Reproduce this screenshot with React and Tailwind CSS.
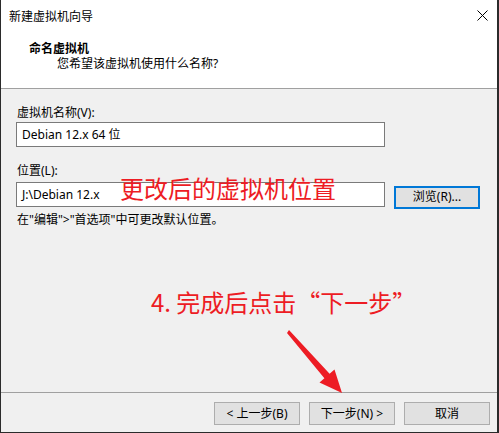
import React from 'react';

const ui = { fontFamily: '"Noto Sans", "Noto Sans CJK SC", sans-serif' };
const mark = { fontFamily: '"Noto Sans CJK SC", "Noto Sans", sans-serif' };

function WinButton({ children, focused }) {
  return (
    <button
      className={`h-[23px] w-[86px] bg-[#e1e1e1] text-[12px] leading-none text-black ${focused ? 'border-2 border-[#0078d7]' : 'border border-[#adadad]'}`}
    >
      {children}
    </button>
  );
}

export default function App() {
  return (
    <div className="relative w-[499px] h-[433px] bg-[#f0f0f0] border-l border-r-2 border-b border-[#2b2b2b] flex flex-col text-black" style={ui}>
      {/* header */}
      <div className="h-[89px] bg-white border-b border-[#a0a0a0] shrink-0">
        <div className="h-[34px] flex items-center justify-between pl-[8px] pr-[9px]">
          <span className="text-[12px]">新建虚拟机向导</span>
          <svg width="11" height="11" viewBox="0 0 11 11" className="mt-[-3px]">
            <path d="M0.5 0.5 L10.5 10.5 M10.5 0.5 L0.5 10.5" stroke="#000" strokeWidth="1" fill="none" />
          </svg>
        </div>
        <div className="mt-[7px] pl-[28px] text-[12px] leading-[15px] font-bold">命名虚拟机</div>
        <div className="pl-[56px] text-[12px] leading-[15px]">您希望该虚拟机使用什么名称?</div>
      </div>

      {/* body */}
      <div className="flex-1 pl-[15px] pt-[16px]">
        <div className="pl-[1px] text-[12px] leading-[16px]">虚拟机名称(V):</div>
        <div className="mt-[1px] w-[369px] h-[25px] bg-white border border-[#7a7a7a] flex items-center pl-[5px] text-[12px]">
          Debian 12.x 64 位
        </div>

        <div className="mt-[16px] pl-[1px] text-[12px] leading-[16px]">位置(L):</div>
        <div className="mt-[3px] flex items-start gap-[9px]">
          <div className="w-[369px] h-[25px] bg-white border border-[#7a7a7a] flex items-center pl-[5px] text-[12px]">
            J:\Debian 12.x
          </div>
          <div className="mt-[1px]">
            <WinButton focused>浏览(R)...</WinButton>
          </div>
        </div>
        <div className="mt-[3px] pl-[1px] text-[12px] leading-[16px]">在"编辑"&gt;"首选项"中可更改默认位置。</div>
      </div>

      {/* footer */}
      <div className="shrink-0 border-t border-[#a0a0a0] pt-[9px] pb-[7px] pr-[7px] flex justify-end gap-[9px]">
        <WinButton>&lt; 上一步(B)</WinButton>
        <WinButton>下一步(N) &gt;</WinButton>
        <WinButton>取消</WinButton>
      </div>

      {/* red annotations */}
      <div className="absolute left-[119px] top-[176px] text-[24px] leading-[24px] text-[#ed1c24]" style={mark}>
        更改后的虚拟机位置
      </div>
      <div className="absolute left-[150px] top-[290px] text-[24px] leading-[24px] text-[#ed1c24]" style={mark}>
        4. 完成后点击“下一步”
      </div>
      <svg className="absolute left-0 top-0 pointer-events-none" width="499" height="433" viewBox="0 0 499 433">
        <polygon
          points="286,333 288,330 328.6,373.7 333.5,369.4 341,393 318.5,382.6 323.4,378.3"
          fill="#ed1c24"
        />
      </svg>
    </div>
  );
}
